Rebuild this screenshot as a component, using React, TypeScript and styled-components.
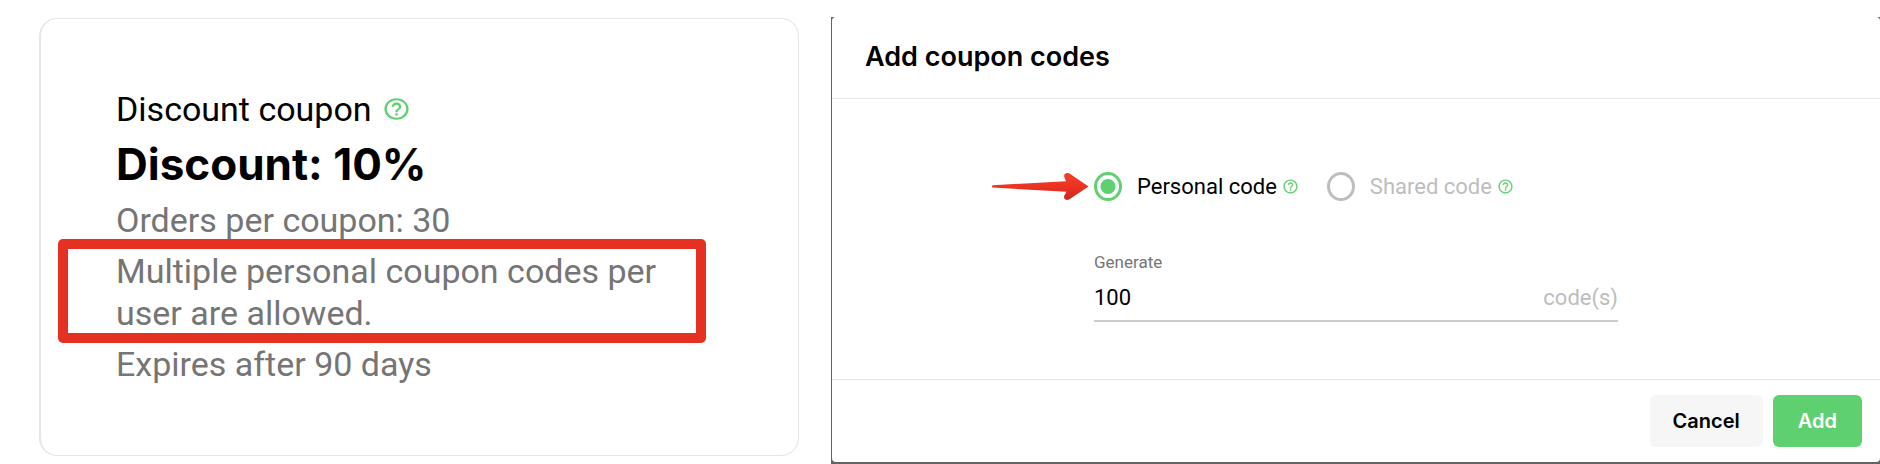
import React from "react";
import styled, { createGlobalStyle } from "styled-components";
import { MdHelpOutline } from "react-icons/md";

const GlobalStyle = createGlobalStyle`
  *, *::before, *::after { box-sizing: border-box; }
  body { margin: 0; background: #fff; color: #000; font-family: Roboto, sans-serif; }
  h1, h2, p { margin: 0; }
`;

const Page = styled.main`
  display: grid;
  grid-template-columns: minmax(0, 760fr) minmax(0, 1049fr);
  align-items: start;
  gap: 32px;
  padding: 17px 0 0 39px;
`;

const Card = styled.section`
  display: flex;
  flex-direction: column;
  gap: 9px;
  margin-top: 1px;
  padding: 69px 75px 70px;
  border: 1px solid #e6e6e6;
  border-left-width: 2px;
  border-radius: 18px;
  font-size: 34px;
  line-height: 42px;
`;

const CardLabel = styled.p`
  display: flex;
  align-items: center;
  gap: 10px;
`;

const CardTitle = styled.h1`
  font: 700 44px/51px Inter, sans-serif;
`;

const Detail = styled.p`
  color: #757575;
`;

const HighlightedDetail = styled(Detail)`
  position: relative;
  max-width: 560px;

  &::after {
    content: "";
    position: absolute;
    inset: -11px -30px -9px -58px;
    border: 10px solid #e53122;
    border-radius: 5px;
  }
`;

const HelpIcon = styled(MdHelpOutline)<{ $large?: boolean }>`
  flex: none;
  width: ${(p) => (p.$large ? 29 : 17)}px;
  height: ${(p) => (p.$large ? 26 : 17)}px;
  color: #5fd070;
`;

const Backdrop = styled.div`
  padding: 0 0 2px 1px;
  background: #636363;
`;

const Dialog = styled.form`
  border-radius: 4px;
  background: #fff;
`;

const DialogHeader = styled.header`
  padding: 20px 33px 21px;
  border-bottom: 1px solid #e6e6e6;
`;

const DialogTitle = styled.h2`
  font: 600 27px/40px Inter, sans-serif;
`;

const DialogBody = styled.div`
  padding: 73px 25% 57px;
`;

const Choices = styled.div`
  position: relative;
  display: flex;
  align-items: center;
  gap: 28px;
  margin-bottom: 51px;
  white-space: nowrap;
`;

const Arrow = styled.svg`
  position: absolute;
  right: 100%;
  top: 0;
  width: 98px;
  height: 29px;
  margin-right: 5px;
`;

const Choice = styled.label<{ $muted?: boolean }>`
  display: flex;
  align-items: center;
  font-size: 22px;
  line-height: 29px;
  color: ${(p) => (p.$muted ? "#bdbdbd" : "#000")};
`;

const ChoiceText = styled.span`
  margin: 0 5px 0 15px;
`;

const Radio = styled.input`
  appearance: none;
  width: 28px;
  height: 29px;
  margin: 0;
  border: 3px solid #bdbdbd;
  border-radius: 50%;

  &:checked {
    border-color: #5fd070;
    background: radial-gradient(circle, #5fd070 7px, transparent 8px);
  }
`;

const FieldLabel = styled.label`
  display: block;
  font-size: 17px;
  line-height: 20px;
  color: #757575;
`;

const FieldRow = styled.div`
  display: flex;
  align-items: center;
  height: 50px;
  padding-top: 2px;
  border-bottom: 2px solid #ccc;
  font-size: 22px;
`;

const FieldInput = styled.input`
  flex: 1;
  min-width: 0;
  padding: 0;
  border: 0;
  outline: 0;
  background: none;
  font: inherit;
  color: #000;
`;

const Suffix = styled.span`
  color: #bdbdbd;
`;

const DialogFooter = styled.footer`
  display: flex;
  justify-content: flex-end;
  gap: 10px;
  padding: 15px 18px;
  border-top: 1px solid #e6e6e6;
`;

const Button = styled.button<{ $primary?: boolean }>`
  height: 52px;
  padding: 0 ${(p) => (p.$primary ? 25 : 23)}px;
  border: 0;
  border-radius: 6px;
  background: ${(p) => (p.$primary ? "#5fd070" : "#f6f6f6")};
  color: ${(p) => (p.$primary ? "#fff" : "#000")};
  font: 600 20px/24px Inter, sans-serif;
`;

export default function App() {
  return (
    <>
      <GlobalStyle />
      <Page>
        <Card>
          <CardLabel>
            Discount coupon
            <HelpIcon $large preserveAspectRatio="none" />
          </CardLabel>
          <CardTitle>Discount: 10%</CardTitle>
          <Detail>Orders per coupon: 30</Detail>
          <HighlightedDetail>
            Multiple personal coupon codes per user are allowed.
          </HighlightedDetail>
          <Detail>Expires after 90 days</Detail>
        </Card>

        <Backdrop>
          <Dialog onSubmit={(e) => e.preventDefault()}>
            <DialogHeader>
              <DialogTitle>Add coupon codes</DialogTitle>
            </DialogHeader>
            <DialogBody>
              <Choices>
                <Arrow viewBox="0 0 98 29" aria-hidden="true">
                  <defs>
                    <linearGradient id="arrow" x1="0" y1="0" x2="0" y2="1">
                      <stop offset="0" stopColor="#f0402c" />
                      <stop offset="0.5" stopColor="#ec3323" />
                      <stop offset="1" stopColor="#c92a1e" />
                    </linearGradient>
                  </defs>
                  <path
                    d="M2 13.2 L75 9.3 L73.5 5.5 C72 2 75.5 .2 78.5 1.6 L97.5 14.5 L78.5 27.3 C75.5 29 72 27.2 73.3 23.6 L75.5 19.7 L2 15.6 C.6 15.3 .6 13.5 2 13.2Z"
                    fill="url(#arrow)"
                  />
                </Arrow>
                <Choice>
                  <Radio type="radio" name="kind" defaultChecked />
                  <ChoiceText>Personal code</ChoiceText>
                  <HelpIcon />
                </Choice>
                <Choice $muted>
                  <Radio type="radio" name="kind" />
                  <ChoiceText>Shared code</ChoiceText>
                  <HelpIcon />
                </Choice>
              </Choices>
              <FieldLabel htmlFor="amount">Generate</FieldLabel>
              <FieldRow>
                <FieldInput id="amount" defaultValue="100" />
                <Suffix>code(s)</Suffix>
              </FieldRow>
            </DialogBody>
            <DialogFooter>
              <Button type="button">Cancel</Button>
              <Button type="submit" $primary>
                Add
              </Button>
            </DialogFooter>
          </Dialog>
        </Backdrop>
      </Page>
    </>
  );
}
